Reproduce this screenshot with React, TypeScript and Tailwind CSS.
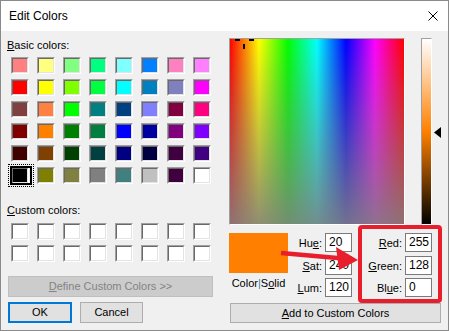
import React from "react";

const basic = [
  ["#FF8080", "#FFFF80", "#80FF80", "#00FF80", "#80FFFF", "#0080FF", "#FF80C0", "#FF80FF"],
  ["#FF0000", "#FFFF00", "#80FF00", "#00FF40", "#00FFFF", "#0080C0", "#8080C0", "#FF00FF"],
  ["#804040", "#FF8040", "#00FF00", "#008080", "#004080", "#8080FF", "#800040", "#FF0080"],
  ["#800000", "#FF8000", "#008000", "#008040", "#0000FF", "#0000A0", "#800080", "#8000FF"],
  ["#400000", "#804000", "#004000", "#004040", "#000080", "#000040", "#400040", "#400080"],
  ["#000000", "#808000", "#808040", "#808080", "#408080", "#C0C0C0", "#400040", "#FFFFFF"],
];

function Swatch({ color, selected }: { color: string; selected?: boolean }) {
  return (
    <div className="relative w-[18px] h-[17px]">
      <div className="w-full h-full border-t border-l border-t-[#a0a0a0] border-l-[#a0a0a0] border-b border-r border-b-white border-r-white">
        <div
          className="w-full h-full border-t border-l border-t-[#696969] border-l-[#696969] border-b border-r border-b-[#e3e3e3] border-r-[#e3e3e3]"
          style={{ backgroundColor: color }}
        />
      </div>
      {selected && (
        <>
          <div className="absolute left-[-1px] top-[-1px] w-[22px] h-[19px] border-2 border-black" />
          <div className="absolute left-[-3px] top-[-3px] w-[26px] h-[23px] border border-dotted border-black" />
        </>
      )}
    </div>
  );
}

function Field({ label, value }: { label: React.ReactNode; value: string }) {
  return (
    <div className="flex items-center">
      <div className="flex-1 text-right pr-[3px] leading-[14px]">{label}</div>
      <div className="w-[27px] h-[19px] border border-[#7a7a7a] bg-white text-[12px] leading-[17px] pl-[3px]">
        {value}
      </div>
    </div>
  );
}

export default function App() {
  return (
    <div className="w-[449px] h-[331px] border border-[#8a8a8a] bg-[#f0f0f0] flex flex-col font-['Liberation_Sans',Arial,sans-serif] text-[11px] text-black relative overflow-hidden">
      {/* Title bar */}
      <div className="h-[30px] bg-white flex items-center pl-[8px] pr-[10px] shrink-0">
        <span className="flex-1 text-[12px]">Edit Colors</span>
        <svg width="10" height="10" viewBox="0 0 10 10">
          <path d="M0.5 0.5 L9.5 9.5 M9.5 0.5 L0.5 9.5" stroke="#000" strokeWidth="1" />
        </svg>
      </div>

      <div className="flex flex-1">
        {/* Left column */}
        <div className="w-[228px] shrink-0 flex flex-col">
          <div className="pl-[6px] pt-[7px] leading-[14px]">
            <span className="underline">B</span>asic colors:
          </div>
          <div className="ml-[10px] mt-[5px] grid grid-cols-[repeat(8,18px)] gap-x-[8px] gap-y-[5px]">
            {basic.flatMap((row, r) =>
              row.map((c, i) => <Swatch key={`${r}-${i}`} color={c} selected={r === 5 && i === 0} />)
            )}
          </div>
          <div className="pl-[6px] mt-[19px] leading-[14px]">
            <span className="underline">C</span>ustom colors:
          </div>
          <div className="ml-[10px] mt-[6px] grid grid-cols-[repeat(8,18px)] gap-x-[8px] gap-y-[5px]">
            {Array.from({ length: 16 }).map((_, i) => (
              <Swatch key={i} color="#FFFFFF" />
            ))}
          </div>
          <div className="ml-[7px] mt-[14px] w-[205px] h-[21px] bg-[#cccccc] border border-[#bfbfbf] text-[#838383] flex items-center justify-center">
            <span>
              <span className="underline">D</span>efine Custom Colors &gt;&gt;
            </span>
          </div>
          <div className="ml-[7px] mt-[5px] flex gap-[8px]">
            <div className="w-[64px] h-[21px] bg-[#e1e1e1] border-2 border-[#0078d7] flex items-center justify-center">
              OK
            </div>
            <div className="w-[63px] h-[21px] bg-[#e1e1e1] border border-[#adadad] flex items-center justify-center">
              Cancel
            </div>
          </div>
        </div>

        {/* Right column */}
        <div className="flex-1 flex flex-col pt-[7px]">
          <div className="flex">
            <div className="relative w-[176px] h-[187px] border-t border-l border-t-[#a0a0a0] border-l-[#a0a0a0] border-b border-r border-b-white border-r-white">
              <div className="w-full h-full bg-[linear-gradient(to_right,#ff0000,#ffff00,#00ff00,#00ffff,#0000ff,#ff00ff,#ff0000)]">
                <div className="w-full h-full bg-[linear-gradient(to_bottom,rgba(128,128,128,0),rgba(128,128,128,0.88))]" />
              </div>
              <div className="absolute left-[5px] top-0 w-[5px] h-[2px] bg-black" />
              <div className="absolute left-[19px] top-0 w-[5px] h-[2px] bg-black" />
              <div className="absolute left-[13px] top-[5px] w-[2px] h-[5px] bg-black" />
            </div>
            <div className="relative ml-[16px] w-[11px] h-[187px] border-t border-l border-t-[#a0a0a0] border-l-[#a0a0a0] border-b border-r border-b-white border-r-white">
              <div className="w-full h-full bg-[linear-gradient(to_bottom,#ffffff,#ff8000,#000000)]" />
              <svg className="absolute left-[12px] top-[88px]" width="7" height="11" viewBox="0 0 7 11">
                <polygon points="0,5.5 7,0 7,11" fill="#000" />
              </svg>
            </div>
          </div>

          <div className="mt-[8px] flex">
            <div className="w-[59px] flex flex-col items-center">
              <div className="w-[59px] h-[40px] bg-[#ff8000]" />
              <div className="mt-[3px] leading-[14px] whitespace-nowrap">
                Color<span className="text-[#3c7fb1]">|</span>S<span className="underline">o</span>lid
              </div>
            </div>
            <div className="w-[64px] flex flex-col">
              <Field label={<>Hu<span className="underline">e</span>:</>} value="20" />
              <div className="mt-[4px]">
                <Field label={<><span className="underline">S</span>at:</>} value="240" />
              </div>
              <div className="mt-[3px]">
                <Field label={<><span className="underline">L</span>um:</>} value="120" />
              </div>
            </div>
            <div className="w-[80px] flex flex-col">
              <Field label={<><span className="underline">R</span>ed:</>} value="255" />
              <div className="mt-[4px]">
                <Field label={<><span className="underline">G</span>reen:</>} value="128" />
              </div>
              <div className="mt-[3px]">
                <Field label={<>Bl<span className="underline">u</span>e:</>} value="0" />
              </div>
            </div>
          </div>

          <div className="mt-[6px] ml-[1px] w-[211px] h-[20px] bg-[#e1e1e1] border border-[#adadad] flex items-center justify-center">
            <span>
              <span className="underline">A</span>dd to Custom Colors
            </span>
          </div>
        </div>
      </div>

      {/* Annotation overlay: red box */}
      <div className="absolute left-[357px] top-[224px] w-[84px] h-[78px] border-4 border-[#e81e2c] rounded-[4px] pointer-events-none" />
      {/* Annotation overlay: red arrow */}
      <svg className="absolute left-0 top-0 pointer-events-none" width="449" height="331" viewBox="0 0 449 331">
        <line x1="280" y1="252" x2="342" y2="257.5" stroke="#e81e2c" strokeWidth="4.5" />
        <polygon points="335,246 357,259 338,269" fill="#e81e2c" />
      </svg>
    </div>
  );
}
